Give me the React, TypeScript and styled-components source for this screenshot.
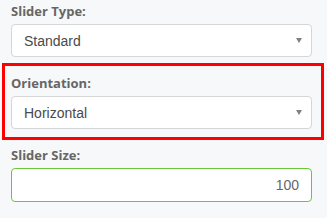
import styled, { createGlobalStyle } from "styled-components";

const GlobalStyle = createGlobalStyle`
  html, body {
    margin: 0;
    padding: 0;
    background: #f7f8fa;
  }
`;

const Panel = styled.div`
  width: 327px;
  height: 218px;
  box-sizing: border-box;
  padding: 2px 15px 0 11px;
  display: flex;
  flex-direction: column;
  gap: 17px;
  background: #f7f8fa;
  overflow: hidden;
`;

const Field = styled.div<{ highlighted?: boolean }>`
  position: relative;
  display: flex;
  flex-direction: column;
  gap: 4px;

  ${(props) =>
    props.highlighted &&
    `
    &::before {
      content: "";
      position: absolute;
      inset: -11px -12px -11px -9px;
      border: 3px solid #ff0000;
      pointer-events: none;
    }
  `}
`;

const Label = styled.label`
  font-family: "Open Sans", sans-serif;
  font-size: 13px;
  line-height: 18px;
  font-weight: 700;
  color: #666;
`;

const SelectBox = styled.div`
  height: 33px;
  box-sizing: border-box;
  border: 1px solid #d6d6d6;
  border-radius: 4px;
  background: #fff;
  display: flex;
  align-items: center;
  justify-content: space-between;
  padding: 0 9px 0 12px;
  font-family: "Liberation Sans", Arial, sans-serif;
  font-size: 14px;
  color: #4a4a4a;
`;

const Caret = styled.span`
  width: 0;
  height: 0;
  border-left: 3.5px solid transparent;
  border-right: 3.5px solid transparent;
  border-top: 5px solid #808080;
`;

const NumberInput = styled.div`
  height: 34px;
  box-sizing: border-box;
  border: 1px solid #66c93a;
  border-radius: 4px;
  background: #fff;
  display: flex;
  align-items: center;
  justify-content: flex-end;
  padding: 0 12px;
  font-family: "Liberation Sans", Arial, sans-serif;
  font-size: 14px;
  color: #666;
`;

export default function App() {
  return (
    <>
      <GlobalStyle />
      <Panel>
        <Field>
          <Label>Slider Type:</Label>
          <SelectBox>
            <span>Standard</span>
            <Caret />
          </SelectBox>
        </Field>
        <Field highlighted>
          <Label>Orientation:</Label>
          <SelectBox>
            <span>Horizontal</span>
            <Caret />
          </SelectBox>
        </Field>
        <Field>
          <Label>Slider Size:</Label>
          <NumberInput>100</NumberInput>
        </Field>
      </Panel>
    </>
  );
}
